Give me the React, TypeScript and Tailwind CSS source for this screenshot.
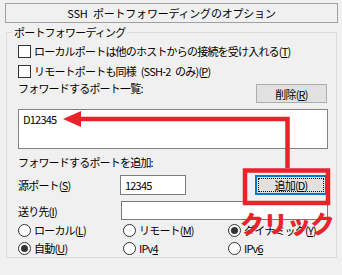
import type { ReactNode } from "react";

const RED = "#e8242b";

function Check({ children }: { children: ReactNode }) {
  return (
    <div className="flex items-center h-[20px]">
      <span className="w-[13px] h-[13px] border border-[#333333] bg-white mr-[3px] shrink-0" />
      <span>{children}</span>
    </div>
  );
}

function Radio({ checked, children }: { checked?: boolean; children: ReactNode }) {
  return (
    <div className="flex items-center h-[18px]">
      <span className="w-[13px] h-[13px] rounded-full border border-[#333333] bg-white mr-[3px] shrink-0 flex items-center justify-center">
        {checked && <span className="w-[7px] h-[7px] rounded-full bg-[#333333]" />}
      </span>
      <span>{children}</span>
    </div>
  );
}

export default function App() {
  return (
    <div className="relative w-[342px] h-[275px] bg-[#f0f0f0] pt-[3px] pl-[5px] pr-[4px] text-[11px] leading-[14px] text-black tracking-[-0.8px] [word-spacing:3px] font-['Noto_Sans_CJK_JP','Noto_Sans',sans-serif] overflow-hidden">
      {/* Title */}
      <div className="h-[20px] border border-[#a0a0a0] flex items-center justify-center tracking-[-0.2px]">
        SSH ポートフォワーディングのオプション
      </div>

      {/* Group */}
      <fieldset className="mt-[2px] mx-[1px] border border-[#dcdcdc] p-0">
        <legend className="ml-[5px] px-[2px]">ポートフォワーディング</legend>
        <div className="pl-[11px] pr-[8px] pt-[2px]">
          <Check>
            ローカルポートは他のホストからの接続を受け入れる(<u>T</u>)
          </Check>
          <Check>
            リモートポートも同様 (SSH-2 のみ)(<u>P</u>)
          </Check>

          <div className="flex items-start h-[22px] mt-[1px]">
            <span className="-mt-[1px]">フォワードするポート一覧:</span>
            <button className="ml-auto mr-[1px] mt-[2px] w-[71px] h-[19px] bg-[#e1e1e1] border border-[#adadad] flex items-center justify-center">
              削除(<u>R</u>)
            </button>
          </div>

          <div className="mt-[5px] h-[40px] bg-white border border-[#828282] px-[4px] pt-[2px]">
            D12345
          </div>

          <div className="h-[26px] flex items-center">フォワードするポートを追加:</div>

          <div className="flex items-center h-[20px]">
            <span className="w-[102px]">
              源ポート(<u>S</u>)
            </span>
            <div className="w-[66px] h-[20px] bg-white border border-[#7a7a7a] px-[4px] flex items-center">
              12345
            </div>
            <button className="ml-auto mr-[1px] w-[72px] h-[20px] bg-[#e1e1e1] border-2 border-[#0078d7] outline-1 outline-dotted outline-black outline-offset-[-4px] flex items-center justify-center">
              追加(<u>D</u>)
            </button>
          </div>

          <div className="flex items-center h-[19px] mt-[6px]">
            <span className="w-[103px]">
              送り先(<u>I</u>)
            </span>
            <div className="flex-1 h-[19px] bg-white border border-[#7a7a7a]" />
          </div>

          <div className="grid grid-cols-[105px_105px_1fr] mt-[1px]">
            <Radio>
              ローカル(<u>L</u>)
            </Radio>
            <Radio>
              リモート(<u>M</u>)
            </Radio>
            <Radio checked>
              ダイナミック(<u>Y</u>)
            </Radio>
            <Radio checked>
              自動(<u>U</u>)
            </Radio>
            <Radio>
              IPv<u>4</u>
            </Radio>
            <Radio>
              IPv<u>6</u>
            </Radio>
          </div>
        </div>
      </fieldset>

      {/* Annotation overlay */}
      <svg className="absolute inset-0 pointer-events-none" width="342" height="275" viewBox="0 0 342 275">
        <polygon points="63,119 81,111 81,127" fill={RED} />
        <path d="M78 119 H287.5 V168" fill="none" stroke={RED} strokeWidth="4.5" />
        <rect x="245" y="170.5" width="83" height="32.5" fill="none" stroke={RED} strokeWidth="4.5" />
      </svg>
      <div className="absolute left-[240px] top-[207px] text-[24px] leading-[32px] font-black tracking-[-0.5px] text-[#e8242b]">
        クリック
      </div>
    </div>
  );
}
